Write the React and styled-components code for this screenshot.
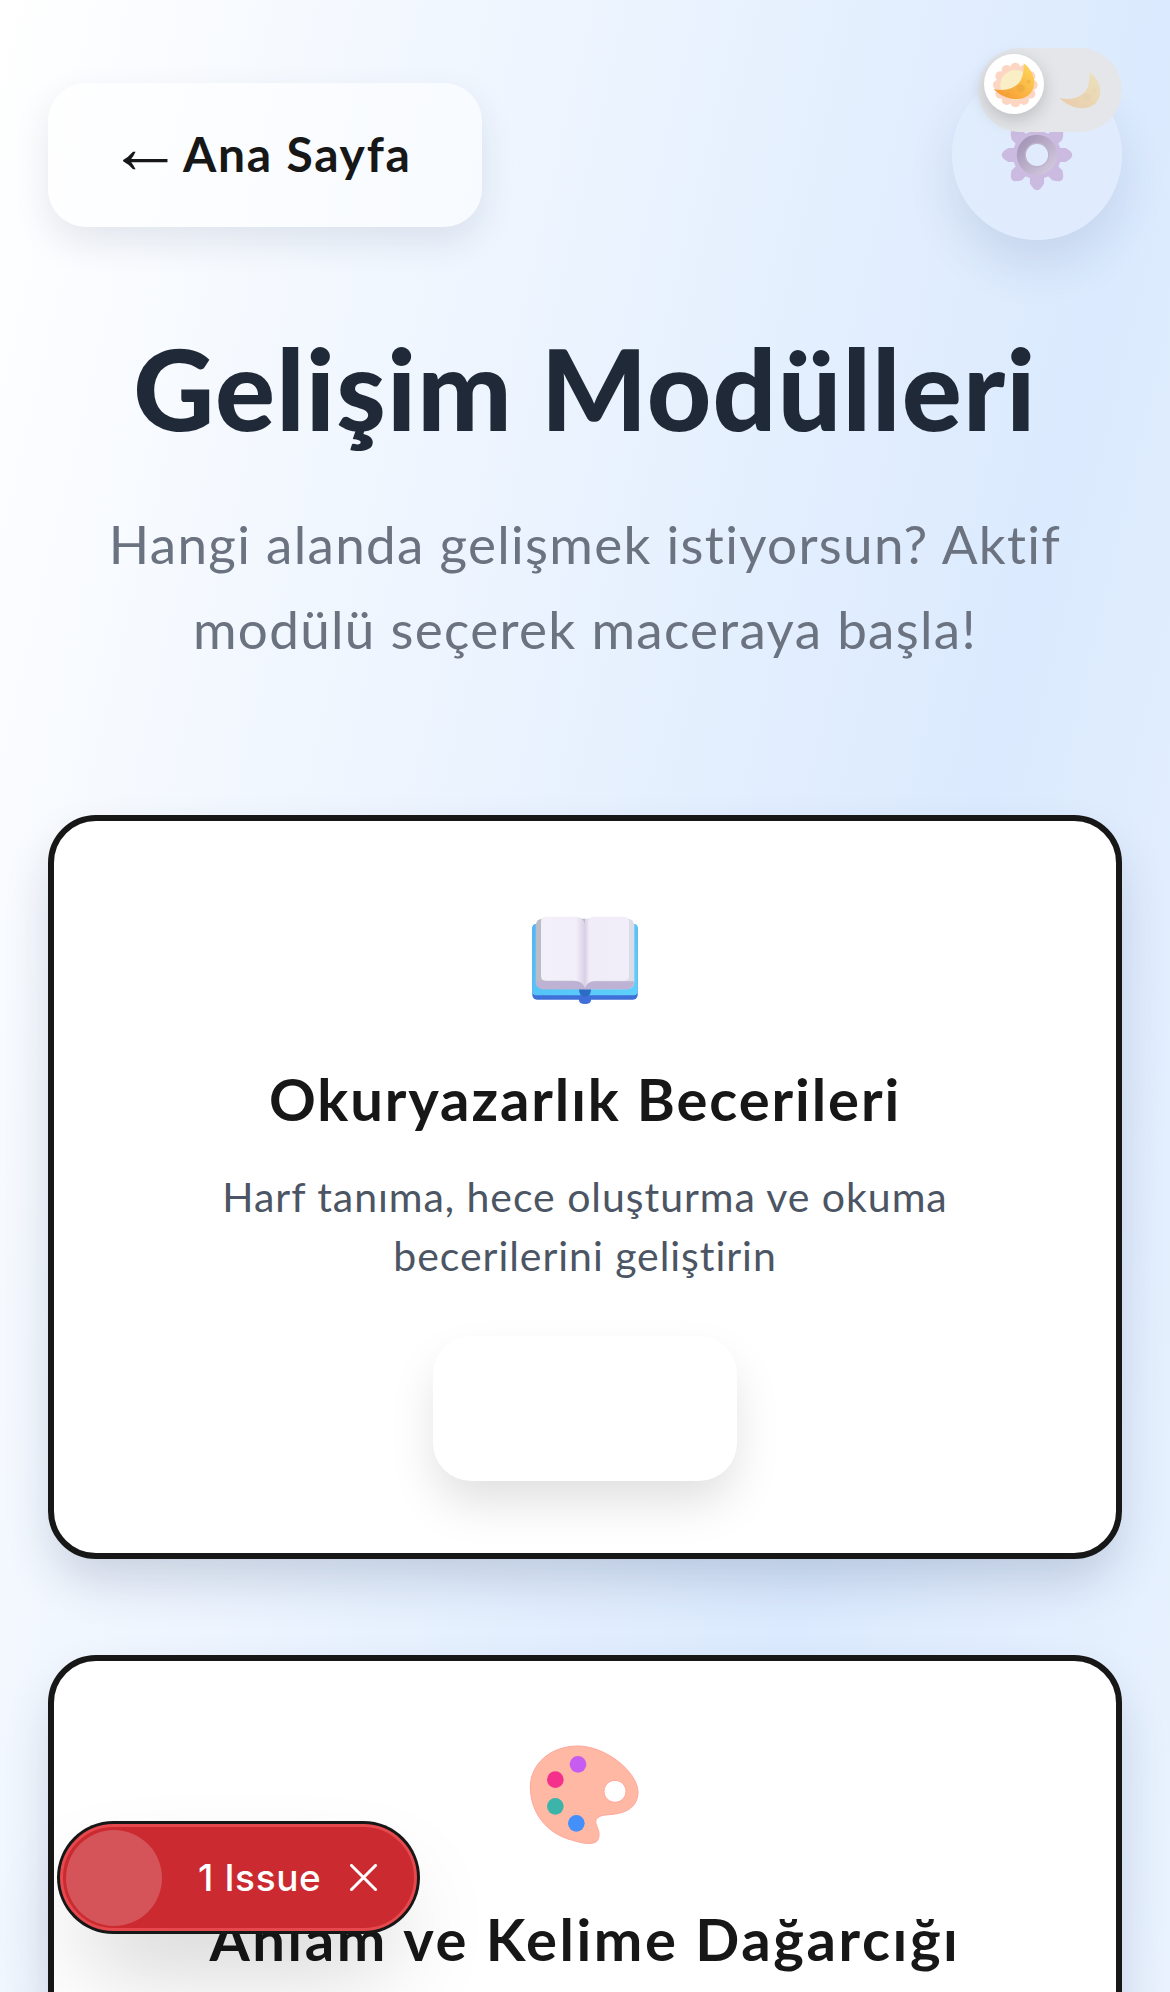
import React from "react";
import styled, { createGlobalStyle } from "styled-components";

const Global = createGlobalStyle`
  html, body { margin: 0; padding: 0; height: 1992px; overflow: hidden; background: #fff; }
  * { box-sizing: border-box; }
  #root { height: 1992px; }
`;

const Page = styled.div`
  position: relative;
  width: 1170px;
  height: 1992px;
  overflow: hidden;
  padding: 70px 48px 0;
  font-family: "Lato", "Noto Sans", sans-serif;
  background: linear-gradient(to bottom right, #ffffff 0%, #dbeafe 50%, #ffffff 100%) 0 0 / 100% 5000px no-repeat;
`;

const Header = styled.header`
  display: flex;
  align-items: center;
  justify-content: space-between;
  height: 170px;
`;

const BackButton = styled.button`
  display: flex;
  align-items: center;
  width: 434px;
  height: 144px;
  padding: 0 0 4px 72px;
  border: none;
  border-radius: 38px;
  background: rgba(255, 255, 255, 0.5);
  box-shadow: 0 15px 36px rgba(20, 40, 80, 0.1);
  color: #171717;
  font: 700 48px "Lato", sans-serif;
  letter-spacing: 1.75px;
`;

const Arrow = styled.span`
  font: 400 75px/48px "Liberation Sans", sans-serif;
  letter-spacing: 0;
  width: 75px;
  text-align: left;
  margin: 0 0 12px -12px;
`;

const GearButton = styled.div`
  display: flex;
  align-items: center;
  justify-content: center;
  width: 170px;
  height: 170px;
  border-radius: 50%;
  background: rgba(224, 236, 253, 0.9);
  box-shadow: 0 24px 48px rgba(30, 60, 110, 0.12);
`;

const ThemeToggle = styled.div`
  position: absolute;
  left: 978px;
  top: 48px;
  width: 144px;
  height: 84px;
  border-radius: 42px;
  background: #e4e6ea;
`;

const Knob = styled.div`
  position: absolute;
  left: 6px;
  top: 6px;
  width: 60px;
  height: 60px;
  border-radius: 50%;
  background: #fff;
  box-shadow: 0 6px 18px rgba(0, 0, 0, 0.18);
`;

const ToggleIcon = styled.svg`
  position: absolute;
  left: ${(p) => p.$left}px;
  top: ${(p) => p.$top}px;
  opacity: ${(p) => p.$opacity};
`;

const Title = styled.h1`
  margin: 81px 0 0;
  text-align: center;
  font-size: 112px;
  line-height: 134px;
  font-weight: 900;
  letter-spacing: 1.2px;
  color: #1f2937;
`;

const Subtitle = styled.p`
  margin: 46px auto 0;
  max-width: 1000px;
  text-align: center;
  font-size: 53px;
  line-height: 85px;
  font-weight: 400;
  letter-spacing: 1.3px;
  color: #6b7280;
`;

const Cards = styled.div`
  display: flex;
  flex-direction: column;
  gap: 96px;
  margin-top: 144px;
`;

const Card = styled.section`
  display: flex;
  flex-direction: column;
  align-items: center;
  height: 744px;
  padding-top: 90px;
  border: 6px solid #171717;
  border-radius: 48px;
  background: #fff;
  box-shadow: 0 25px 50px -6px rgba(30, 50, 90, 0.2);
`;

const IconBox = styled.div`
  display: flex;
  align-items: center;
  justify-content: center;
  height: 100px;
`;

const CardTitle = styled.h2`
  margin: 50px 0 0;
  font-size: 58px;
  line-height: 76px;
  font-weight: 700;
  letter-spacing: ${(p) => p.$tracking}px;
  color: #171717;
`;

const CardText = styled.p`
  margin: 30px 0 0;
  max-width: 780px;
  text-align: center;
  font-size: 41px;
  line-height: 59px;
  letter-spacing: 0.95px;
  color: #4b5563;
`;

const GhostButton = styled.div`
  width: 304px;
  height: 145px;
  margin-top: 51px;
  border-radius: 38px;
  background: #fff;
  box-shadow: 0 24px 48px -4px rgba(0, 0, 0, 0.13);
`;

const IssueBadge = styled.div`
  position: absolute;
  left: 60px;
  top: 1824px;
  width: 357px;
  height: 107px;
  display: flex;
  align-items: center;
  border-radius: 54px;
  border: 3px solid #e5484d;
  background: #ca2a30;
  box-shadow: 0 0 0 3px #171717, 0 48px 96px -24px rgba(0, 0, 0, 0.26);
  color: #fff;
  font: 500 37px "Inter", "Liberation Sans", sans-serif;
`;

const IssueDot = styled.span`
  width: 96px;
  height: 96px;
  margin-left: 3px;
  border-radius: 50%;
  background: rgba(255, 255, 255, 0.2);
`;

const IssueLabel = styled.span`
  margin-left: 36px;
  width: 152px;
  letter-spacing: 0.6px;
`;

const Moon = () => (
  <>
    <path
      d="M378 135C405 155 420 190 402 220C380 252 325 250 288 212C330 222 362 205 372 180C378 165 378 150 378 135Z"
      fill="url(#moonFill)"
    />
    <circle cx="369" cy="210" r="12" fill="#e8a53a" opacity=".55" />
    <circle cx="330" cy="228" r="7" fill="#e8a53a" opacity=".55" />
    <circle cx="393" cy="190" r="6" fill="#e8a53a" opacity=".45" />
  </>
);

const Scallop = () => {
  const bumps = Array.from({ length: 12 }, (_, i) => (i * Math.PI) / 6);
  return (
    <>
      {bumps.map((a) => (
        <circle key={a} cx={353 + 52 * Math.cos(a)} cy={200 + 52 * Math.sin(a)} r="15" fill="#fcd6c2" />
      ))}
      <circle cx="353" cy="200" r="52" fill="#fcd6c2" />
      <circle cx="353" cy="200" r="45" fill="#f9eec6" />
    </>
  );
};

const Defs = () => (
  <svg width="0" height="0" style={{ position: "absolute" }}>
    <defs>
      <linearGradient id="moonFill" x1="1" y1="0" x2="0" y2="1">
        <stop offset="0" stopColor="#fedb5e" />
        <stop offset="1" stopColor="#f7932c" />
      </linearGradient>
      <linearGradient id="coverFill" x1="0" y1="0" x2="1" y2="1">
        <stop offset="0" stopColor="#4ab8f7" />
        <stop offset="1" stopColor="#5fd0fb" />
      </linearGradient>
      <linearGradient id="hubFill" x1="0" y1="0" x2="1" y2="1">
        <stop offset="0" stopColor="#9b8db0" />
        <stop offset="1" stopColor="#d9d0e4" />
      </linearGradient>
      <linearGradient id="pageL" x1="0" y1="0" x2="1" y2="0">
        <stop offset="0" stopColor="#f3f0fa" />
        <stop offset=".8" stopColor="#f1eef9" />
        <stop offset="1" stopColor="#d8d0e6" />
      </linearGradient>
      <linearGradient id="pageR" x1="1" y1="0" x2="0" y2="0">
        <stop offset="0" stopColor="#f1eef9" />
        <stop offset=".9" stopColor="#f0edf8" />
        <stop offset="1" stopColor="#d8d0e6" />
      </linearGradient>
    </defs>
  </svg>
);

const GearIcon = () => {
  const petals = Array.from({ length: 8 }, (_, i) => (i * Math.PI) / 4);
  return (
    <svg width="74" height="74" viewBox="300 293 220 220">
      {petals.map((a) => (
        <path
          key={a}
          d="M389 345L389 318Q410 278 431 318L431 345Z"
          fill="#cbbbe0"
          transform={`rotate(${(a * 180) / Math.PI} 410 403)`}
        />
      ))}
      <circle cx="410" cy="403" r="72" fill="#cbbbe0" />
      <circle cx="410" cy="403" r="60" fill="url(#hubFill)" />
      <circle cx="410" cy="403" r="35" fill="#e0ecfd" stroke="#bdb2cc" strokeWidth="4" />
    </svg>
  );
};

const BookIcon = () => (
  <svg width="112" height="95" viewBox="150 108 336 285">
    <path d="M300 340h36v26q0 12-18 12t-18-12z" fill="#3f6fd8" />
    <rect x="160" y="138" width="316" height="227" rx="14" fill="#3f6fd8" />
    <rect x="160" y="138" width="316" height="214" rx="12" fill="url(#coverFill)" />
    <path d="M300 320h36v14q0 22-18 22t-18-22z" fill="#2d6cc4" />
    <path d="M170 140q4-18 20-18h130v212h-128q-22-2-22-22z" fill="#bcbcc8" />
    <path d="M466 140q-4-18-20-18H318v212h126q22-2 22-22z" fill="#dadde7" />
    <path d="M170 310q2 24 24 24h96q20 0 28 0q8 0 28 0h96q22 0 24-24z" fill="#bdb2d3" />
    <path d="M186 132q0-16 16-16h86q24 0 30 22v192q-8-22-34-22h-84q-14 0-14-14z" fill="url(#pageL)" />
    <path d="M450 132q0-16-16-16h-86q-24 0-30 22v192q8-22 34-22h84q14 0 14-14z" fill="url(#pageR)" />
  </svg>
);

const PaletteIcon = () => (
  <svg width="112" height="112" viewBox="149 99 336 336">
    <path
      fillRule="evenodd"
      d="M295 102C380 102 475 180 476 240C476 285 440 305 390 308C365 309 345 315 350 335C355 350 365 365 355 385C345 400 310 395 280 385C200 365 153 300 153 225C153 155 215 102 295 102ZM407 205a33 33 0 1 0 .01 0Z"
      fill="#ffb8a3"
      stroke="#ffa79c"
      strokeWidth="3"
    />
    <circle cx="296" cy="157" r="25" fill="#c65cf0" />
    <circle cx="228" cy="203" r="25" fill="#f4308c" />
    <circle cx="228" cy="283" r="25" fill="#3cb4aa" />
    <circle cx="291" cy="334" r="25" fill="#4390fa" />
  </svg>
);

const CloseIcon = () => (
  <svg width="27" height="27" viewBox="0 0 27 27" fill="none" stroke="#fff" strokeWidth="3" strokeLinecap="square">
    <path d="M1.5 1.5l24 24M25.5 1.5l-24 24" />
  </svg>
);

export default function App() {
  return (
    <Page>
      <Global />
      <Defs />
      <Header>
        <BackButton>
          <Arrow>←</Arrow>
          Ana Sayfa
        </BackButton>
        <GearButton>
          <GearIcon />
        </GearButton>
      </Header>
      <ThemeToggle>
        <Knob />
        <ToggleIcon $left={13} $top={12} $opacity={1} width="48" height="48" viewBox="280 125 144 144">
          <Scallop />
          <Moon />
        </ToggleIcon>
        <ToggleIcon $left={79} $top={21} $opacity={0.32} width="48" height="48" viewBox="280 125 144 144">
          <Moon />
        </ToggleIcon>
      </ThemeToggle>
      <Title>Gelişim Modülleri</Title>
      <Subtitle>Hangi alanda gelişmek istiyorsun? Aktif modülü seçerek maceraya başla!</Subtitle>
      <Cards>
        <Card>
          <IconBox>
            <BookIcon />
          </IconBox>
          <CardTitle $tracking={1.9}>Okuryazarlık Becerileri</CardTitle>
          <CardText>Harf tanıma, hece oluşturma ve okuma becerilerini geliştirin</CardText>
          <GhostButton />
        </Card>
        <Card>
          <IconBox>
            <PaletteIcon />
          </IconBox>
          <CardTitle $tracking={2.6}>Anlam ve Kelime Dağarcığı</CardTitle>
        </Card>
      </Cards>
      <IssueBadge>
        <IssueDot />
        <IssueLabel>1 Issue</IssueLabel>
        <CloseIcon />
      </IssueBadge>
    </Page>
  );
}
